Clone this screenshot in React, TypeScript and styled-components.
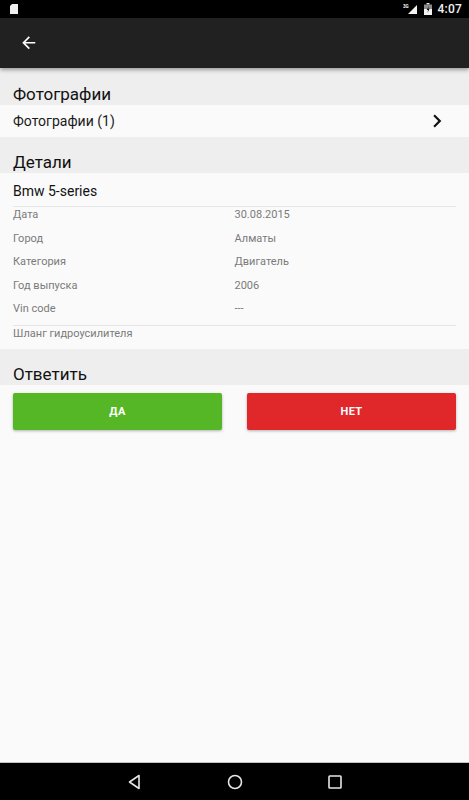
import React from "react";
import styled, { createGlobalStyle } from "styled-components";

const Global = createGlobalStyle`
  html, body { margin: 0; padding: 0; background: #fafafa; }
  body { font-family: Roboto, "Noto Sans", Arial, sans-serif; -webkit-font-smoothing: antialiased; }
  * { box-sizing: border-box; }
`;

const Screen = styled.div`
  width: 469px;
  height: 800px;
  display: flex;
  flex-direction: column;
  background: #fafafa;
  overflow: hidden;
`;

const StatusBar = styled.div`
  height: 18px;
  flex: none;
  background: #000;
  display: flex;
  align-items: center;
  justify-content: space-between;
  padding: 0 7px 0 10px;
  color: #fff;
`;

const StatusRight = styled.div`
  display: flex;
  align-items: center;
  gap: 6px;
`;

const Clock = styled.span`
  font-size: 12px;
  font-weight: 500;
  letter-spacing: 0.2px;
  color: #f2f2f2;
`;

const Toolbar = styled.div`
  height: 50px;
  flex: none;
  background: #212121;
  display: flex;
  align-items: center;
  padding-left: 19px;
  position: relative;
  z-index: 2;
  box-shadow: 0 2px 4px rgba(0, 0, 0, 0.35);
`;

const Content = styled.main`
  flex: 1;
  display: flex;
  flex-direction: column;
  background: #fafafa;
`;

const SectionHeader = styled.div<{ $h: number }>`
  height: ${(p) => p.$h}px;
  background: #eeeeee;
  display: flex;
  align-items: flex-end;
  padding: 0 13px 1px;
  font-size: 17px;
  line-height: 20px;
  color: #111;
`;

const LinkRow = styled.div`
  height: 32px;
  display: flex;
  align-items: center;
  justify-content: space-between;
  padding: 0 19px 0 13px;
  background: #fafafa;
  font-size: 14px;
  color: #1a1a1a;
`;

const Details = styled.div`
  background: #fafafa;
  padding: 0 13px;
  display: flex;
  flex-direction: column;
`;

const Title = styled.div`
  height: 34px;
  padding-top: 2px;
  display: flex;
  align-items: center;
  font-size: 14px;
  line-height: 16px;
  color: #111;
  border-bottom: 1px solid #e6e6e6;
`;

const Grid = styled.div`
  display: grid;
  grid-template-columns: 1fr 1fr;
  grid-auto-rows: 23.5px;
  border-bottom: 1px solid #e6e6e6;
`;

const Cell = styled.div`
  padding-top: 1px;
  font-size: 11px;
  line-height: 13px;
  color: #7a7a7a;
`;

const Note = styled.div`
  height: 23px;
  padding-top: 1px;
  font-size: 11px;
  line-height: 13px;
  color: #7a7a7a;
`;

const Buttons = styled.div`
  display: grid;
  grid-template-columns: 1fr 1fr;
  gap: 25px;
  padding: 8px 13px 0;
`;

const Btn = styled.button<{ $bg: string }>`
  height: 37px;
  border: none;
  border-radius: 2px;
  background: ${(p) => p.$bg};
  color: #fff;
  font-family: Roboto, Arial, sans-serif;
  font-size: 11px;
  font-weight: 700;
  letter-spacing: 0.3px;
  box-shadow: 0 1px 3px rgba(0, 0, 0, 0.3);
`;

const NavBar = styled.div`
  height: 38px;
  flex: none;
  background: #000;
  border-top: 1px solid #c4c4c4;
  display: flex;
  align-items: center;
  justify-content: center;
  gap: 82px;
  padding-top: 1px;
`;

const NavIcon = styled.svg`
  width: 18px;
  height: 18px;
  display: block;
`;

const details: [string, string][] = [
  ["Дата", "30.08.2015"],
  ["Город", "Алматы"],
  ["Категория", "Двигатель"],
  ["Год выпуска", "2006"],
  ["Vin code", "---"],
];

export default function App() {
  return (
    <>
      <Global />
      <Screen>
        <StatusBar>
          <svg width="8" height="10" viewBox="0 0 8 10">
            <path d="M2 0H8V10H0V2Z" fill="#f0f0f0" />
          </svg>
          <StatusRight>
            <svg width="15" height="11" viewBox="0 0 15 11">
              <text x="0" y="4" fontSize="4.5" fill="#fff" fontFamily="Roboto, Arial, sans-serif" fontWeight="700">3G</text>
              <path d="M14 1V10H5Z" fill="#f2f2f2" />
            </svg>
            <svg width="8" height="12" viewBox="0 0 8 12">
              <rect x="2.5" y="0" width="3" height="1.5" fill="#e8e8e8" />
              <rect x="0" y="1.5" width="8" height="10.5" fill="#8a8a8a" />
              <rect x="0" y="6" width="8" height="6" fill="#f2f2f2" />
              <path d="M4.8 3L2.8 7H4.2L3.4 10L5.6 5.8H4.2Z" fill="#000" />
            </svg>
            <Clock>4:07</Clock>
          </StatusRight>
        </StatusBar>
        <Toolbar>
          <svg width="19.5" height="19.5" viewBox="0 0 24 24">
            <path d="M20 11H7.83l5.59-5.59L12 4l-8 8 8 8 1.41-1.41L7.83 13H20v-2z" fill="#fff" />
          </svg>
        </Toolbar>
        <Content>
          <SectionHeader $h={37}>Фотографии</SectionHeader>
          <LinkRow>
            <span>Фотографии (1)</span>
            <svg width="26" height="26" viewBox="0 0 24 24">
              <path d="M10 6L8.59 7.41 13.17 12l-4.58 4.59L10 18l6-6z" fill="#111" />
            </svg>
          </LinkRow>
          <SectionHeader $h={36}>Детали</SectionHeader>
          <Details>
            <Title>Bmw 5-series</Title>
            <Grid>
              {details.map(([k, v]) => (
                <React.Fragment key={k}>
                  <Cell>{k}</Cell>
                  <Cell>{v}</Cell>
                </React.Fragment>
              ))}
            </Grid>
            <Note>Шланг гидроусилителя</Note>
          </Details>
          <SectionHeader $h={36}>Ответить</SectionHeader>
          <Buttons>
            <Btn $bg="#55b726">ДА</Btn>
            <Btn $bg="#e0282a">НЕТ</Btn>
          </Buttons>
        </Content>
        <NavBar>
          <NavIcon viewBox="0 0 18 18">
            <path d="M13 2.5V15.5L3.5 9Z" fill="none" stroke="#e6e6e6" strokeWidth="1.6" strokeLinejoin="round" />
          </NavIcon>
          <NavIcon viewBox="0 0 18 18">
            <circle cx="9" cy="9" r="6.5" fill="none" stroke="#e6e6e6" strokeWidth="1.6" />
          </NavIcon>
          <NavIcon viewBox="0 0 18 18">
            <rect x="3" y="3" width="12" height="12" rx="0.8" fill="none" stroke="#e6e6e6" strokeWidth="1.6" />
          </NavIcon>
        </NavBar>
      </Screen>
    </>
  );
}
